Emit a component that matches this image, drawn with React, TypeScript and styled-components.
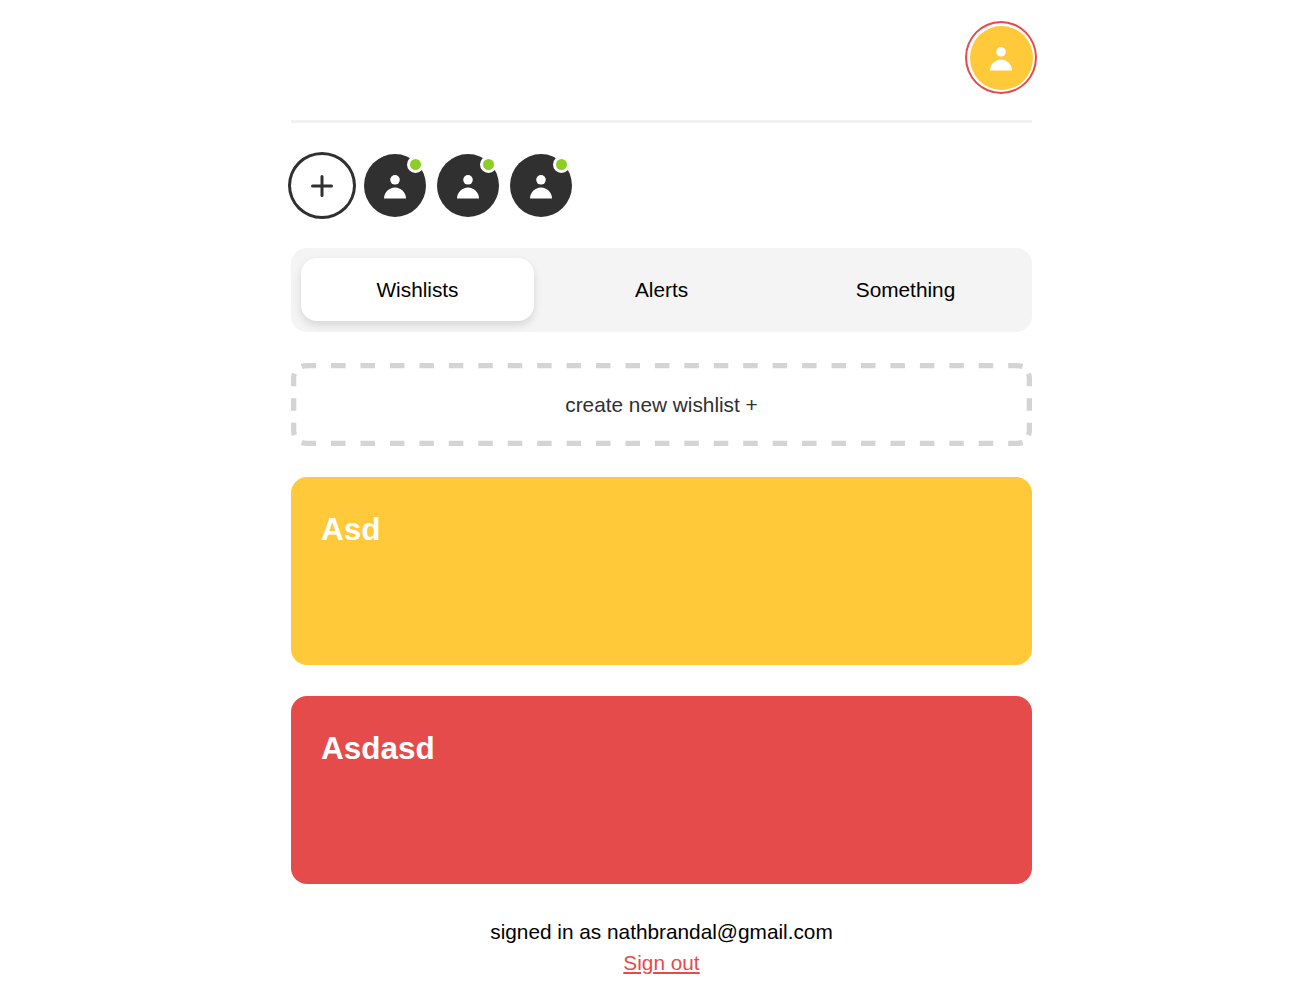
import styled, { createGlobalStyle } from "styled-components";

const GlobalStyle = createGlobalStyle`
  body {
    margin: 0;
    background: #fff;
    font-family: "Liberation Sans", Arial, sans-serif;
  }
`;

const Page = styled.div`
  width: 741px;
  margin-left: 291px;
  display: flex;
  flex-direction: column;
`;

const Header = styled.header`
  display: flex;
  justify-content: flex-end;
  padding-top: 21px;
  padding-bottom: 26px;
  border-bottom: 3px solid #f2f2f2;
`;

const ProfileButton = styled.div`
  width: 72px;
  height: 73px;
  margin-right: -5px;
  box-sizing: border-box;
  border: 2px solid #e54b4b;
  border-radius: 50%;
  padding: 2.5px;
  background: #fff;
`;

const Avatar = styled.div<{ $color: string }>`
  width: 100%;
  height: 100%;
  border-radius: 50%;
  background: ${(p) => p.$color};
  display: flex;
  align-items: center;
  justify-content: center;
`;

const Friends = styled.div`
  display: flex;
  align-items: center;
  gap: 11px;
  margin-top: 29px;
  margin-left: -3px;
`;

const AddButton = styled.div`
  width: 68px;
  height: 67px;
  box-sizing: border-box;
  margin-right: -3px;
  border: 3px solid #303030;
  border-radius: 50%;
  display: flex;
  align-items: center;
  justify-content: center;
`;

const Friend = styled.div`
  position: relative;
  width: 62px;
  height: 63px;
`;

const OnlineDot = styled.span`
  position: absolute;
  top: 2px;
  right: 2px;
  width: 11px;
  height: 11px;
  border: 3px solid #fff;
  border-radius: 50%;
  background: #8cce25;
`;

const Tabs = styled.nav`
  display: grid;
  grid-template-columns: repeat(3, 1fr);
  gap: 11px;
  margin-top: 29px;
  padding: 10px 10px 11px;
  height: 84px;
  box-sizing: border-box;
  border-radius: 16px;
  background: #f4f4f4;
`;

const Tab = styled.div<{ $active?: boolean }>`
  display: flex;
  align-items: center;
  justify-content: center;
  border-radius: 16px;
  font-size: 20.8px;
  color: #000;
  background: ${(p) => (p.$active ? "#fff" : "transparent")};
  box-shadow: ${(p) => (p.$active ? "0 4px 8px rgba(0, 0, 0, 0.12)" : "none")};
`;

const CreateButton = styled.div`
  position: relative;
  margin-top: 31px;
  height: 83px;
  box-sizing: border-box;
  padding-top: 1px;
  display: flex;
  align-items: center;
  justify-content: center;
  font-size: 20.8px;
  color: #303030;
`;

const DashedOutline = styled.svg`
  position: absolute;
  inset: 0;
  fill: none;
  stroke: #d4d4d4;
  stroke-width: 5.3;
`;

const Wishlist = styled.section<{ $color: string }>`
  margin-top: 31px;
  height: 188px;
  box-sizing: border-box;
  padding: 35px 30px;
  border-radius: 16px;
  background: ${(p) => p.$color};
  color: #fff;
`;

const WishlistTitle = styled.h2`
  margin: 0;
  font-size: 31.5px;
  line-height: 34px;
  font-weight: 700;
`;

const Footer = styled.footer`
  margin-top: 32px;
  display: flex;
  flex-direction: column;
  align-items: center;
  font-size: 20.8px;
  line-height: 31px;
  color: #000;
`;

const SignOut = styled.a`
  color: #e54b4b;
  text-decoration: underline;
`;

const PersonSvg = styled.svg`
  margin-top: 2px;
  fill: #fff;
`;

const PersonIcon = () => (
  <PersonSvg width="22" height="24" viewBox="0 0 22 24">
    <circle cx="11" cy="4.8" r="4.8" />
    <path d="M0 23.500C0 17.500 5 12.500 11 12.500s11 5 11 11z" />
  </PersonSvg>
);

const PlusIcon = () => (
  <svg width="24" height="24" viewBox="0 0 24 24" fill="none" stroke="#303030" strokeWidth="3" strokeLinecap="round">
    <path d="M12 2.500v19M2.500 12h19" />
  </svg>
);

export default function App() {
  return (
    <>
      <GlobalStyle />
      <Page>
        <Header>
          <ProfileButton>
            <Avatar $color="#ffc939">
              <PersonIcon />
            </Avatar>
          </ProfileButton>
        </Header>
        <Friends>
          <AddButton>
            <PlusIcon />
          </AddButton>
          {[0, 1, 2].map((i) => (
            <Friend key={i}>
              <Avatar $color="#303030">
                <PersonIcon />
              </Avatar>
              <OnlineDot />
            </Friend>
          ))}
        </Friends>
        <Tabs>
          <Tab $active>Wishlists</Tab>
          <Tab>Alerts</Tab>
          <Tab>Something</Tab>
        </Tabs>
        <CreateButton>
          <DashedOutline width="741" height="83" viewBox="0 0 741 83">
            <path strokeDasharray="14.5 14.94" d="M10.700 3.500Q13 2.650 16 2.650H725Q728 2.650 731.800 3.500" />
            <path strokeDasharray="14.5 14.94" d="M10.700 79.500Q13 80.350 16 80.350H725Q728 80.350 731.800 79.500" />
            <path strokeDasharray="12.5 12.05" d="M3.500 10.700Q2.650 13 2.650 16V67Q2.650 70 3.500 72.300" />
            <path strokeDasharray="12.5 12.05" d="M737.500 10.700Q738.350 13 738.350 16V67Q738.350 70 737.500 72.300" />
          </DashedOutline>
          create new wishlist +
        </CreateButton>
        <Wishlist $color="#ffc939">
          <WishlistTitle>Asd</WishlistTitle>
        </Wishlist>
        <Wishlist $color="#e54b4b">
          <WishlistTitle>Asdasd</WishlistTitle>
        </Wishlist>
        <Footer>
          <span>signed in as nathbrandal@gmail.com</span>
          <SignOut href="#">Sign out</SignOut>
        </Footer>
      </Page>
    </>
  );
}
